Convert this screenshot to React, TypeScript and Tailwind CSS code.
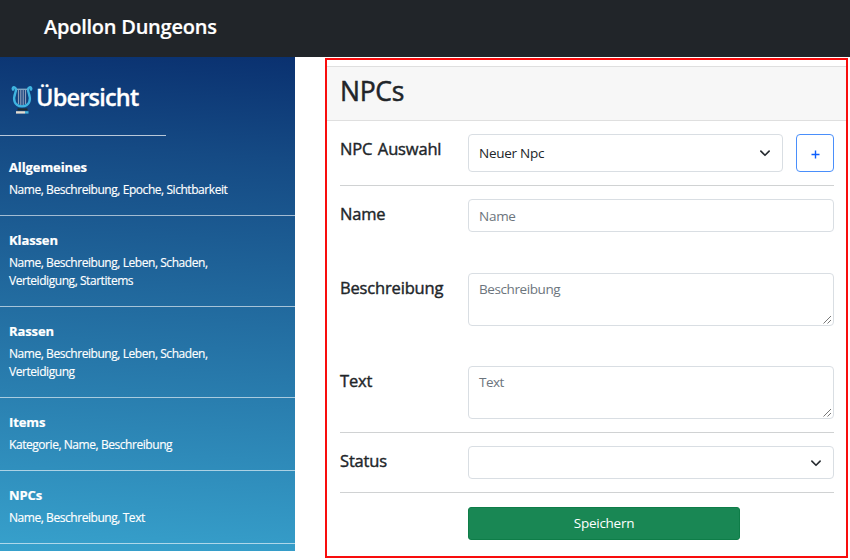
import type { ReactNode } from "react";

const sections = [
  { title: "Allgemeines", lines: ["Name, Beschreibung, Epoche, Sichtbarkeit"] },
  { title: "Klassen", lines: ["Name, Beschreibung, Leben, Schaden,", "Verteidigung, Startitems"] },
  { title: "Rassen", lines: ["Name, Beschreibung, Leben, Schaden,", "Verteidigung"] },
  { title: "Items", lines: ["Kategorie, Name, Beschreibung"] },
  { title: "NPCs", lines: ["Name, Beschreibung, Text"] },
];

function Lyre() {
  return (
    <svg width="22" height="30" viewBox="0 0 22 30" fill="none" className="mt-[4px] shrink-0">
      <path d="M7.500 4v15M9.800 4v17M12.200 4v17M14.500 4v15" stroke="#8d9db8" strokeWidth="1.200" />
      <path d="M5 4.300h12" stroke="#7fa6c4" strokeWidth="1.400" />
      <path
        d="M2 4.600C1.200 3 2.300 2 3.400 2.400c2 .8 1.800 3 .9 5.400C2.200 13.500 2.400 21.400 11 21.400s8.800-7.900 6.700-13.600c-.9-2.400-1.100-4.600.9-5.400 1.100-.4 2.200.6 1.400 2.200"
        stroke="#3fb4e0"
        strokeWidth="2.400"
        strokeLinecap="round"
      />
      <path d="M6.500 24.400h10" stroke="#1d2c30" strokeWidth="2" />
      <path d="M5 27.400h9" stroke="#e4dcd0" strokeWidth="2.400" />
      <path d="M14 27.400h3.500" stroke="#45b4dc" strokeWidth="2.400" />
    </svg>
  );
}

function Chevron() {
  return (
    <svg width="12" height="12" viewBox="0 0 16 16" fill="none" className="shrink-0">
      <path d="m2.500 5.500 5.500 5.500 5.500-5.500" stroke="#272c31" strokeWidth="2.200" strokeLinecap="round" strokeLinejoin="round" />
    </svg>
  );
}

function Grip() {
  return (
    <svg width="9" height="9" viewBox="0 0 9 9" fill="none" className="shrink-0 self-end">
      <path d="M0.500 8.500 8 1M4.500 8.500 8 5" stroke="#777" strokeWidth="1" />
    </svg>
  );
}

function Row({ label, className, children }: { label: string; className: string; children: ReactNode }) {
  return (
    <div className={"flex items-start " + className}>
      <div className="w-[128px] shrink-0 pt-[3px] text-[16.500px] leading-[23px] tracking-[-0.010em] [-webkit-text-stroke:0.4px_#212529] [word-spacing:1.500px]">
        {label}
      </div>
      {children}
    </div>
  );
}

const field = "flex flex-1 rounded-[4px] border border-[#d9dee3] bg-white pl-[10px]";

export default function App() {
  return (
    <div className="flex h-[560px] w-[850px] flex-col overflow-hidden bg-white font-['Open_Sans','Noto_Sans',sans-serif] text-[#212529]">
      <header className="flex h-[57px] shrink-0 items-center bg-[#212529] pb-[3px] pl-[44px]">
        <span className="text-[20px] font-semibold tracking-[-0.012em] text-white [-webkit-text-stroke:0.2px_#fff]">Apollon Dungeons</span>
      </header>
      <div className="flex min-h-0 flex-1">
        <aside className="h-[494px] w-[295px] shrink-0 overflow-hidden bg-[linear-gradient(184deg,#0a3170_0%,#154a84_20%,#37a1cc_100%)] text-white">
          <div className="flex h-[79px] w-[166px] items-center gap-[3px] border-b border-white/70 pt-[3px] pl-[11px]">
            <Lyre />
            <h2 className="text-[23.500px] font-semibold tracking-[-0.034em] [-webkit-text-stroke:0.3px_#fff]">Übersicht</h2>
          </div>
          <nav className="pt-[7px]">
            {sections.map((s) => (
              <section key={s.title} className="border-b border-white/60 pt-[14px] pb-[16px] pl-[9px]">
                <h3 className="mb-[4px] text-[13px] leading-[20px] font-bold tracking-[-0.008em] [-webkit-text-stroke:0.2px_#fff]">{s.title}</h3>
                {s.lines.map((l) => (
                  <p key={l} className="text-[12px] leading-[18px] tracking-[-0.037em] whitespace-nowrap [-webkit-text-stroke:0.15px_#fff]">{l}</p>
                ))}
              </section>
            ))}
          </nav>
        </aside>
        <main className="mt-[1px] ml-[30px] flex h-[500px] w-[523px] shrink-0 flex-col border-2 border-[#f80d0d] pt-[6px]">
          <div className="flex h-[55px] shrink-0 items-center border-t border-b border-[#dfdfdf] bg-[#f7f7f7] pb-[4px] pl-[13px]">
            <h1 className="text-[26.500px] tracking-[-0.010em] [-webkit-text-stroke:0.5px_#212529]">NPCs</h1>
          </div>
          <div className="flex flex-col pt-[13px] pr-[12px] pl-[13px]">
            <Row label="NPC Auswahl" className="h-[51px]">
              <div className={field + " h-[38px] items-center justify-between pr-[11px]"}>
                <span className="text-[13.500px] tracking-[-0.020em]">Neuer Npc</span>
                <Chevron />
              </div>
              <button className="ml-[13px] flex h-[38px] w-[38px] items-center justify-center rounded-[4px] border border-[#4a8ffb] text-[#0d6efd]">
                <svg width="9" height="9" viewBox="0 0 9 9" className="mt-[2px]">
                  <path d="M4.500 0.500v8M0.500 4.500h8" stroke="#0d5ffd" strokeWidth="1.400" />
                </svg>
              </button>
            </Row>
            <hr className="h-px border-0 bg-[#d0d2d3]" />
            <Row label="Name" className="h-[87px] pt-[13px]">
              <div className={field + " h-[33px] items-center pt-px"}>
                <span className="text-[13.500px] tracking-[-0.020em] text-[#6c757d]">Name</span>
              </div>
            </Row>
            <Row label="Beschreibung" className="h-[93px]">
              <div className={field + " h-[53px] justify-between pt-[5px] pr-px pb-px"}>
                <span className="text-[13.500px] leading-[21px] tracking-[-0.030em] text-[#6c757d]">Beschreibung</span>
                <Grip />
              </div>
            </Row>
            <Row label="Text" className="h-[66px]">
              <div className={field + " h-[53px] justify-between pt-[5px] pr-px pb-px"}>
                <span className="text-[13.500px] leading-[21px] tracking-[-0.040em] text-[#6c757d]">Text</span>
                <Grip />
              </div>
            </Row>
            <hr className="h-px border-0 bg-[#d0d2d3]" />
            <Row label="Status" className="h-[59px] pt-[13px]">
              <div className={field + " h-[33px] items-center justify-end pr-[11px]"}>
                <Chevron />
              </div>
            </Row>
            <hr className="h-px border-0 bg-[#d0d2d3]" />
            <button className="mt-[14px] ml-[128px] flex h-[33px] w-[272px] items-center justify-center rounded-[3px] border border-[#0e7d48] bg-[#198754] text-[13.500px] tracking-[-0.020em] text-white">
              Speichern
            </button>
          </div>
        </main>
      </div>
    </div>
  );
}
